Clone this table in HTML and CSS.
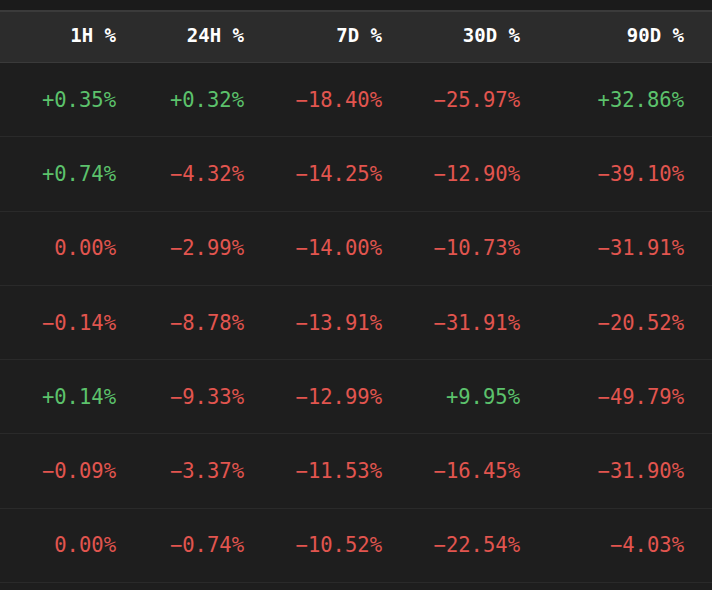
FILE: index.html
```html
<!DOCTYPE html>
<html>
<head>
<meta charset="utf-8">
<link rel="stylesheet" href="styles.css">
</head>
<body>
<div class="topbar"></div>
<div class="table">
  <div class="row head">
    <div class="cell">1H %</div>
    <div class="cell">24H %</div>
    <div class="cell">7D %</div>
    <div class="cell">30D %</div>
    <div class="cell">90D %</div>
  </div>
  <div class="row">
    <div class="cell up">+0.35%</div>
    <div class="cell up">+0.32%</div>
    <div class="cell down">−18.40%</div>
    <div class="cell down">−25.97%</div>
    <div class="cell up">+32.86%</div>
  </div>
  <div class="row">
    <div class="cell up">+0.74%</div>
    <div class="cell down">−4.32%</div>
    <div class="cell down">−14.25%</div>
    <div class="cell down">−12.90%</div>
    <div class="cell down">−39.10%</div>
  </div>
  <div class="row">
    <div class="cell down">0.00%</div>
    <div class="cell down">−2.99%</div>
    <div class="cell down">−14.00%</div>
    <div class="cell down">−10.73%</div>
    <div class="cell down">−31.91%</div>
  </div>
  <div class="row">
    <div class="cell down">−0.14%</div>
    <div class="cell down">−8.78%</div>
    <div class="cell down">−13.91%</div>
    <div class="cell down">−31.91%</div>
    <div class="cell down">−20.52%</div>
  </div>
  <div class="row">
    <div class="cell up">+0.14%</div>
    <div class="cell down">−9.33%</div>
    <div class="cell down">−12.99%</div>
    <div class="cell up">+9.95%</div>
    <div class="cell down">−49.79%</div>
  </div>
  <div class="row">
    <div class="cell down">−0.09%</div>
    <div class="cell down">−3.37%</div>
    <div class="cell down">−11.53%</div>
    <div class="cell down">−16.45%</div>
    <div class="cell down">−31.90%</div>
  </div>
  <div class="row">
    <div class="cell down">0.00%</div>
    <div class="cell down">−0.74%</div>
    <div class="cell down">−10.52%</div>
    <div class="cell down">−22.54%</div>
    <div class="cell down">−4.03%</div>
  </div>
</div>
</body>
</html>
```
FILE: styles.css
```css
html, body {
  margin: 0;
  padding: 0;
  background: #1e1e1e;
  width: 712px;
  height: 590px;
  overflow: hidden;
}
body {
  font-family: "DejaVu Sans Mono", "Liberation Mono", monospace;
}
.topbar {
  height: 10px;
  background: #1b1b1b;
  border-bottom: 2px solid #3b3b3b;
}
.table {
  display: flex;
  flex-direction: column;
}
.row {
  display: grid;
  grid-template-columns: 116px 128px 138px 138px 164px;
  padding-right: 28px;
  height: 73.3px;
  align-items: center;
  border-bottom: 1px solid #2a2a2a;
  font-size: 20.5px;
}
.row.head {
  height: 50px;
  background: #2c2c2c;
  border-bottom: 1px solid #3a3a3a;
  font-size: 19px;
  font-weight: bold;
  color: #ffffff;
}
.row.head .cell {
  transform: translateY(-2px);
}
.cell {
  text-align: right;
  white-space: nowrap;
}
.up {
  color: #5cc26c;
}
.down {
  color: #e2554f;
}
```
